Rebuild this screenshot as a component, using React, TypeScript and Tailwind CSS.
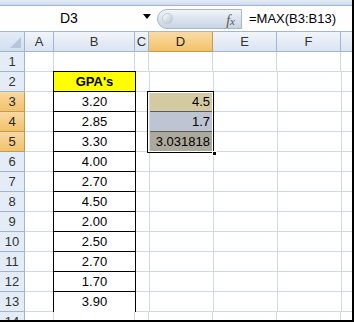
const cols = [
  { key: "A", w: "w-[29px]" },
  { key: "B", w: "w-[81px]" },
  { key: "C", w: "w-[14px]" },
  { key: "D", w: "w-[64px]" },
  { key: "E", w: "w-[64px]" },
  { key: "F", w: "w-[64px]" },
  { key: "G", w: "w-[40px]" },
];

const gpas = ["3.20", "2.85", "3.30", "4.00", "2.70", "4.50", "2.00", "2.50", "2.70", "1.70", "3.90"];

const dValues: Record<number, { v: string; bg: string }> = {
  3: { v: "4.5", bg: "bg-[#d3caa2]" },
  4: { v: "1.7", bg: "bg-[#bec4d1]" },
  5: { v: "3.031818", bg: "bg-[#aba99b]" },
};

const FormulaBar = () => (
  <div className="h-[32px] flex flex-col bg-white border-b border-[#a5b6cd]">
    <div className="h-[6px] bg-gradient-to-b from-[#e3ebf6] to-[#cfdcee] border-b border-[#9fb4d1]" />
    <div className="flex-1 flex items-center">
      <div className="w-[150px] flex items-center relative">
        <span className="ml-[60px] text-[14px] text-black">D3</span>
        <svg className="absolute left-[143px] top-[6px]" width="8" height="5" viewBox="0 0 8 5">
          <path d="M0 0 L8 0 L4 5 Z" fill="#000" />
        </svg>
      </div>
      <div className="ml-[7px] w-[85px] h-[20px] rounded-l-full bg-gradient-to-b from-[#f2f5f9] via-[#dbe3ee] to-[#c9d4e3] border border-[#a7b5c8] flex items-center relative">
        <div className="ml-[4px] w-[11px] h-[11px] rounded-full bg-gradient-to-br from-[#ffffff] to-[#b9c3cf] border border-[#c1cbd8]" />
        <span className="absolute right-[6px] top-[0px] italic font-['Liberation_Serif',serif] text-[14px] text-[#555]">
          f<span className="text-[11px]">x</span>
        </span>
      </div>
      <span className="ml-[7px] text-[13px] text-black">=MAX(B3:B13)</span>
    </div>
  </div>
);

const ColHeader = () => (
  <div className="flex h-[20px]">
    <div className="w-[25px] shrink-0 border-r border-b border-[#9eb6ce] bg-gradient-to-b from-[#e4ecf7] to-[#d3deef] relative">
      <svg className="absolute right-[3px] bottom-[3px]" width="11" height="11" viewBox="0 0 11 11">
        <path d="M11 0 L11 11 L0 11 Z" fill="#b5c6dd" />
      </svg>
    </div>
    {cols.map((c) => (
      <div
        key={c.key}
        className={`${c.w} shrink-0 border-r border-b flex items-center justify-center text-[13px] ${
          c.key === "D"
            ? "bg-gradient-to-b from-[#f9dca6] to-[#f2c266] border-[#c29a50] text-[#222]"
            : "bg-gradient-to-b from-[#f2f5fa] to-[#dae4f2] border-[#9eb6ce] text-[#333]"
        }`}
      >
        {c.key === "G" ? "" : c.key}
      </div>
    ))}
  </div>
);

const Row = ({ n }: { n: number }) => {
  const active = n >= 3 && n <= 5;
  const d = dValues[n];
  return (
    <div className="flex h-[20px]">
      <div
        className={`w-[25px] shrink-0 border-r border-b flex items-center justify-center text-[13px] ${
          active
            ? "bg-gradient-to-b from-[#f8d9a0] to-[#f1c26a] border-[#c29a50] text-[#222]"
            : "bg-[#e4ecf7] border-[#9eb6ce] text-[#333]"
        }`}
      >
        {n}
      </div>
      {cols.map((c) => {
        if (c.key === "B" && n >= 2 && n <= 13) {
          return (
            <div
              key={c.key}
              className={`${c.w} shrink-0 h-[20px] border border-black -mt-px -ml-px box-content flex items-center justify-center text-[13px] ${
                n === 2 ? "bg-[#ffff00] font-bold" : "bg-white"
              }`}
            >
              {n === 2 ? "GPA's" : gpas[n - 3]}
            </div>
          );
        }
        if (c.key === "D" && d) {
          return (
            <div
              key={c.key}
              className={`${c.w} shrink-0 border-r border-b border-[#5a5a5a] ${d.bg} flex items-center justify-end pr-[3px] text-[13px]`}
            >
              {d.v}
            </div>
          );
        }
        return <div key={c.key} className={`${c.w} shrink-0 border-r border-b border-[#d0d7e5] bg-white`} />;
      })}
    </div>
  );
};

export default function App() {
  const rows = Array.from({ length: 14 }, (_, i) => i + 1);
  return (
    <div className="w-[354px] h-[323px] overflow-hidden bg-white font-['Liberation_Sans',Arial,sans-serif] text-black">
      <div className="w-[354px] h-[322px] border-r-2 border-b-2 border-black overflow-hidden relative">
        <FormulaBar />
        <ColHeader />
        {rows.map((n) => (
          <Row key={n} n={n} />
        ))}
        <div className="absolute left-[147px] top-[91px] w-[67px] h-[62px] border border-black pointer-events-none">
          <div className="w-full h-full border border-white" />
          <div className="absolute right-[-4px] bottom-[-4px] w-[5px] h-[5px] bg-black border border-white" />
        </div>
      </div>
    </div>
  );
}
